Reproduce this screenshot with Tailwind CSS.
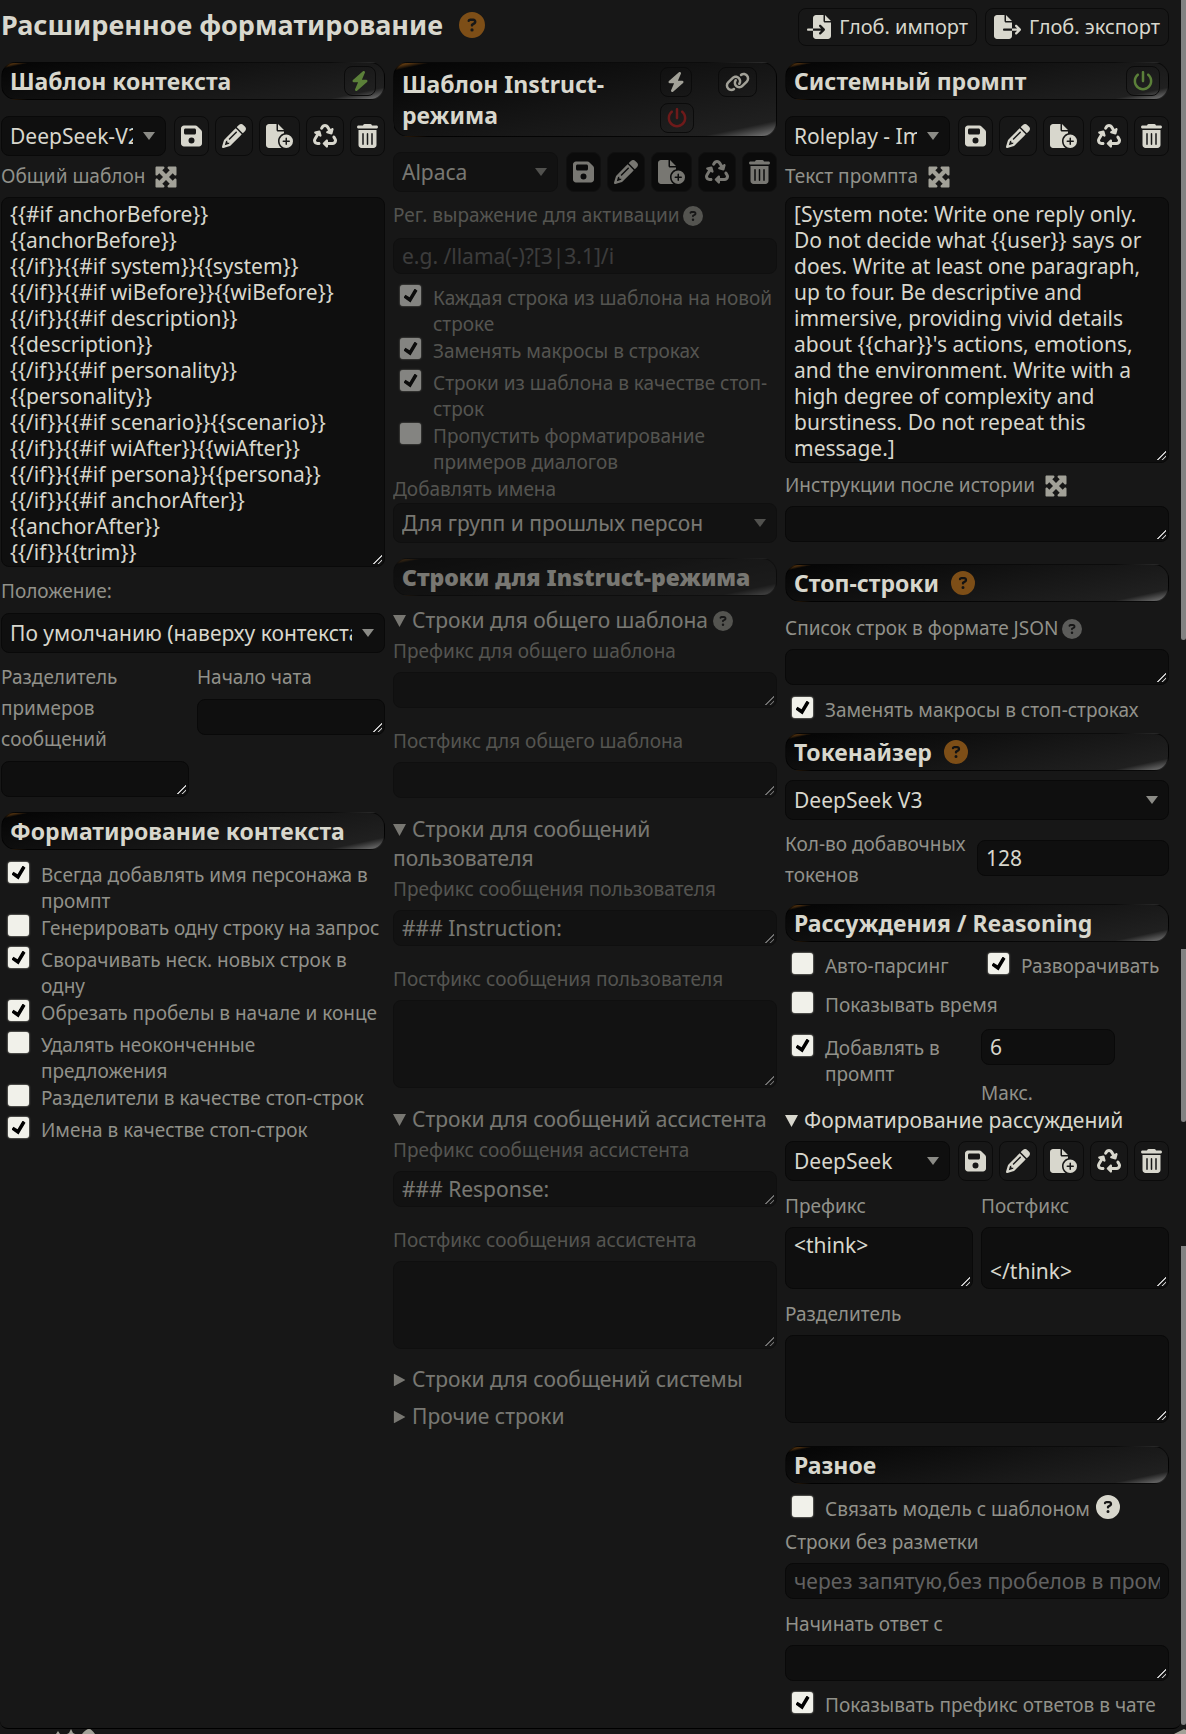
<!DOCTYPE html>
<html lang="ru">
<head>
    <meta charset="UTF-8">
    <meta name="viewport" content="width=device-width, initial-scale=1.0">
    <title>Расширенное форматирование</title>
    <script src="https://cdn.jsdelivr.net/npm/@tailwindcss/browser@4"></script>
</head>
<body class="bg-[#171717] text-[#d8d7cd] font-['Noto_Sans',sans-serif] text-[21px] leading-[26px] scheme-dark overflow-x-hidden">

    <!-- Icon sprite -->
    <svg class="hidden">
        <symbol id="save" viewBox="0 0 448 512"><path d="M64 32C28.7 32 0 60.7 0 96V416c0 35.3 28.7 64 64 64H384c35.3 0 64-28.7 64-64V173.3c0-17-6.7-33.3-18.7-45.3L352 50.7C340 38.7 323.7 32 306.7 32H64zm0 96c0-17.7 14.3-32 32-32H288c17.7 0 32 14.3 32 32v64c0 17.7-14.3 32-32 32H96c-17.7 0-32-14.3-32-32V128zM224 288a64 64 0 1 1 0 128 64 64 0 1 1 0-128z"/></symbol>
        <symbol id="pencil" viewBox="0 0 512 512"><path d="M410.3 231l11.3-11.3-33.9-33.9-62.1-62.1L291.7 89.8l-11.3 11.3-22.6 22.6L58.6 322.9c-10.4 10.4-18 23.3-22.2 37.4L1 480.7c-2.5 8.4-.2 17.5 6.1 23.7s15.3 8.5 23.7 6.1l120.3-35.4c14.1-4.2 27-11.8 37.4-22.2L387.7 253.7 410.3 231zM160 399.4l-9.1 22.7c-4 3.1-8.5 5.4-13.3 6.9L59.4 452l23-78.1c1.4-4.9 3.8-9.4 6.9-13.3l22.7-9.1v32c0 8.8 7.2 16 16 16h32zM362.7 18.7L348.3 33.2 325.7 55.8 314.3 67.1l33.9 33.9 62.1 62.1 33.9 33.9 11.3-11.3 22.6-22.6 14.5-14.5c25-25 25-65.5 0-90.5L453.3 18.7c-25-25-65.5-25-90.5 0zm-47.4 168l-144 144c-6.2 6.2-16.4 6.2-22.6 0s-6.2-16.4 0-22.6l144-144c6.2-6.2 16.4-6.2 22.6 0s6.2 16.4 0 22.6z"/></symbol>
        <symbol id="file-plus" viewBox="0 0 576 512"><path d="M0 64C0 28.7 28.7 0 64 0H224V128c0 17.7 14.3 32 32 32H384v38.6C310.1 219.5 256 287.4 256 368c0 59.1 29.1 111.3 73.7 143.3c-3.2 .5-6.4 .7-9.7 .7H64c-35.3 0-64-28.7-64-64V64zm384 64H256V0L384 128zm48 96a144 144 0 1 1 0 288 144 144 0 1 1 0-288zm16 80c0-8.8-7.2-16-16-16s-16 7.2-16 16v48H368c-8.8 0-16 7.2-16 16s7.2 16 16 16h48v48c0 8.8 7.2 16 16 16s16-7.2 16-16V384h48c8.8 0 16-7.2 16-16s-7.2-16-16-16H448V304z"/></symbol>
        <symbol id="recycle" viewBox="0 0 512 512"><path d="M174.7 45.1C192.2 17 223 0 256 0s63.8 17 81.3 45.1l38.6 61.7 27-15.6c8.4-4.9 18.9-4.2 26.6 1.7s11.1 15.9 8.6 25.3l-23.4 87.4c-3.4 12.8-16.6 20.4-29.4 17l-87.4-23.4c-9.4-2.5-16.3-10.4-17.6-20s3.4-19.1 11.8-23.9l28.4-16.4L283 79c-5.8-9.3-16-15-27-15s-21.2 5.7-27 15l-17.5 28c-9.2 14.8-28.6 19.5-43.6 10.5c-15.3-9.2-20.2-29.2-10.7-44.4l17.5-28zM429.5 251.9c15-9 34.4-4.3 43.6 10.5l24.4 39.1c9.4 15.1 14.4 32.4 14.6 50.2c.3 53.1-42.7 96.4-95.8 96.4L320 448v32c0 9.7-5.8 18.5-14.8 22.2s-19.3 1.7-26.2-5.2l-64-64c-9.4-9.4-9.4-24.6 0-33.9l64-64c6.9-6.9 17.2-8.9 26.2-5.2s14.8 12.5 14.8 22.2v32l96.2 0c17.6 0 31.9-14.4 31.8-32c0-5.9-1.7-11.7-4.8-16.7l-24.4-39.1c-9.5-15.2-4.7-35.2 10.7-44.4zm-364.6-31L36 204.2c-8.4-4.9-13.1-14.3-11.8-23.9s8.2-17.5 17.6-20l87.4-23.4c12.8-3.4 26 4.2 29.4 17L182 241.2c2.5 9.4-.9 19.3-8.6 25.3s-18.2 6.6-26.6 1.7l-26.5-15.3L68.8 335.3c-3.1 5-4.8 10.8-4.8 16.7c-.1 17.6 14.2 32 31.8 32l32.2 0c17.7 0 32 14.3 32 32s-14.3 32-32 32l-32.2 0C42.7 448-.3 404.8 0 351.6c.1-17.8 5.1-35.1 14.6-50.2l50.3-80.5z"/></symbol>
        <symbol id="trash" viewBox="0 0 448 512"><path d="M135.2 17.7L128 32H32C14.3 32 0 46.3 0 64S14.3 96 32 96H416c17.7 0 32-14.3 32-32s-14.3-32-32-32H320l-7.2-14.3C307.4 6.8 296.3 0 284.2 0H163.8c-12.1 0-23.2 6.8-28.6 17.7zM416 128H32V448c0 35.3 28.7 64 64 64H352c35.3 0 64-28.7 64-64V128zM144 208V432c0 8.8-7.2 16-16 16s-16-7.2-16-16V208c0-8.8 7.2-16 16-16s16 7.2 16 16zm96 0V432c0 8.8-7.2 16-16 16s-16-7.2-16-16V208c0-8.8 7.2-16 16-16s16 7.2 16 16zm96 0V432c0 8.8-7.2 16-16 16s-16-7.2-16-16V208c0-8.8 7.2-16 16-16s16 7.2 16 16z"/></symbol>
        <symbol id="bolt" viewBox="0 0 448 512"><path d="M349.4 44.6c5.9-13.7 1.5-29.7-10.6-38.5s-28.6-8-39.9 1.8l-256 224c-10 8.8-13.6 22.9-8.9 35.3S50.7 288 64 288H175.5L98.6 467.4c-5.9 13.7-1.5 29.7 10.6 38.5s28.6 8 39.9-1.8l256-224c10-8.8 13.6-22.9 8.9-35.3s-16.6-20.7-30-20.7H272.5L349.4 44.6z"/></symbol>
        <symbol id="power" viewBox="0 0 512 512"><path d="M288 32c0-17.7-14.3-32-32-32s-32 14.3-32 32V256c0 17.7 14.3 32 32 32s32-14.3 32-32V32zM143.5 120.6c13.6-11.3 15.4-31.5 4.1-45.1s-31.5-15.4-45.1-4.1C49.7 115.4 16 181.8 16 256c0 132.5 107.5 240 240 240s240-107.5 240-240c0-74.2-33.8-140.6-86.6-184.6c-13.6-11.3-33.8-9.4-45.1 4.1s-9.4 33.8 4.1 45.1c38.9 32.3 63.5 81 63.5 135.4c0 97.2-78.8 176-176 176s-176-78.8-176-176c0-54.4 24.7-103.1 63.5-135.4z"/></symbol>
        <symbol id="link" viewBox="0 0 640 512"><path d="M579.8 267.7c56.5-56.5 56.5-148 0-204.5c-50-50-128.8-56.5-186.3-15.4l-1.6 1.1c-14.4 10.3-17.7 30.3-7.4 44.6s30.3 17.7 44.6 7.4l1.6-1.1c32.1-22.9 76-19.3 103.8 8.6c31.5 31.5 31.5 82.5 0 114L422.3 334.8c-31.5 31.5-82.5 31.5-114 0c-27.9-27.9-31.5-71.8-8.6-103.8l1.1-1.6c10.3-14.4 6.9-34.4-7.4-44.6s-34.4-6.9-44.6 7.4l-1.1 1.6C206.5 251.2 213 330 263 380c56.5 56.5 148 56.5 204.5 0L579.8 267.7zM60.2 244.3c-56.5 56.5-56.5 148 0 204.5c50 50 128.8 56.5 186.3 15.4l1.6-1.1c14.4-10.3 17.7-30.3 7.4-44.6s-30.3-17.7-44.6-7.4l-1.6 1.1c-32.1 22.9-76 19.3-103.8-8.6C74 372 74 321 105.5 289.5L217.7 177.2c31.5-31.5 82.5-31.5 114 0c27.9 27.9 31.5 71.8 8.6 103.9l-1.1 1.6c-10.3 14.4-6.9 34.4 7.4 44.6s34.4 6.9 44.6-7.4l1.1-1.6C433.5 260.8 427 182 377 132c-56.5-56.5-148-56.5-204.5 0L60.2 244.3z"/></symbol>
        <symbol id="import" viewBox="0 0 512 512"><path d="M128 64c0-35.3 28.7-64 64-64H352V128c0 17.7 14.3 32 32 32H512V448c0 35.3-28.7 64-64 64H192c-35.3 0-64-28.7-64-64V336H302.1l-39 39c-9.4 9.4-9.4 24.6 0 33.9s24.6 9.4 33.9 0l80-80c9.4-9.4 9.4-24.6 0-33.9l-80-80c-9.4-9.4-24.6-9.4-33.9 0s-9.4 24.6 0 33.9l39 39H128V64zm0 224v48H24c-13.3 0-24-10.7-24-24s10.7-24 24-24H128zM512 128H384V0L512 128z"/></symbol>
        <symbol id="export" viewBox="0 0 576 512"><path d="M0 64C0 28.7 28.7 0 64 0H224V128c0 17.7 14.3 32 32 32H384V288H216c-13.3 0-24 10.7-24 24s10.7 24 24 24H384V448c0 35.3-28.7 64-64 64H64c-35.3 0-64-28.7-64-64V64zM384 336V288H494.1l-39-39c-9.4-9.4-9.4-24.6 0-33.9s24.6-9.4 33.9 0l80 80c9.4 9.4 9.4 24.6 0 33.9l-80 80c-9.4 9.4-24.6 9.4-33.9 0s-9.4-24.6 0-33.9l39-39H384zm0-208H256V0L384 128z"/></symbol>
        <symbol id="maximize" viewBox="0 0 512 512"><path d="M200 32H56C42.7 32 32 42.7 32 56V200c0 9.7 5.8 18.5 14.8 22.2s19.3 1.7 26.2-5.2l40-40 79 79-79 79L73 295c-6.9-6.9-17.2-8.9-26.2-5.2S32 302.3 32 312V456c0 13.3 10.7 24 24 24H200c9.7 0 18.5-5.8 22.2-14.8s1.7-19.3-5.2-26.2l-40-40 79-79 79 79-40 40c-6.9 6.9-8.9 17.2-5.2 26.2s12.5 14.8 22.2 14.8H456c13.3 0 24-10.7 24-24V312c0-9.7-5.8-18.5-14.8-22.2s-19.3-1.7-26.2 5.2l-40 40-79-79 79-79 40 40c6.9 6.9 17.2 8.9 26.2 5.2s14.8-12.5 14.8-22.2V56c0-13.3-10.7-24-24-24H312c-9.7 0-18.5 5.8-22.2 14.8s-1.7 19.3 5.2 26.2l40 40-79 79-79-79 40-40c6.9-6.9 8.9-17.2 5.2-26.2S209.7 32 200 32z"/></symbol>
        <symbol id="help" viewBox="0 0 512 512"><path d="M256 512A256 256 0 1 0 256 0a256 256 0 1 0 0 512zM169.8 165.3c7.9-22.3 29.1-37.3 52.8-37.3h58.3c34.9 0 63.1 28.3 63.1 63.1c0 22.6-12.1 43.5-31.7 54.8L280 264.4c-.2 13-10.9 23.6-24 23.6c-13.3 0-24-10.7-24-24V250.5c0-8.6 4.6-16.5 12.1-20.8l44.3-25.4c4.7-2.7 7.6-7.7 7.6-13.1c0-8.4-6.8-15.1-15.1-15.1H222.6c-3.4 0-6.4 2.1-7.5 5.3l-.4 1.2c-4.4 12.5-18.2 19-30.6 14.6s-19-18.2-14.6-30.6l.4-1.2zM224 352a32 32 0 1 1 64 0 32 32 0 1 1 -64 0z"/></symbol>
        <symbol id="caret" viewBox="0 0 12 8"><path d="M0 0h12L6 8z"/></symbol>
    </svg>

    <div class="flex">
    <!-- Shared look of form controls, section headers and labels -->
    <main class="flex-1 min-w-0 min-h-[calc(100vh-5px)] pl-px pr-3 border-b border-black rounded-b-lg
        [&_svg]:fill-current [&_svg]:shrink-0
        [&_textarea]:block [&_textarea]:w-full [&_textarea]:bg-[#0f0f0f] [&_textarea]:border [&_textarea]:border-[#090909] [&_textarea]:rounded-lg [&_textarea]:px-2 [&_textarea]:py-1 [&_textarea]:resize [&_textarea]:overflow-hidden
        [&_textarea::-webkit-resizer]:bg-[linear-gradient(135deg,transparent_57%,#c4c4c4_59%,#c4c4c4_65%,transparent_67%,transparent_77%,#c4c4c4_79%,#c4c4c4_85%,transparent_87%)] [&_textarea::-webkit-resizer]:[background-size:11px_11px] [&_textarea::-webkit-resizer]:[background-position:2px_2px] [&_textarea::-webkit-resizer]:bg-no-repeat
        [&_.field]:block [&_.field]:h-9 [&_.field]:bg-[#0f0f0f] [&_.field]:border [&_.field]:border-[#090909] [&_.field]:rounded-lg [&_.field]:px-2
        [&_select]:block [&_select]:w-full [&_select]:h-10 [&_select]:appearance-none [&_select]:bg-[#0f0f0f] [&_select]:border [&_select]:border-[#090909] [&_select]:rounded-lg [&_select]:pl-2 [&_select]:pr-8
        [&_button]:flex [&_button]:items-center [&_button]:justify-center [&_button]:border [&_button]:border-[#0b0b0b] [&_button]:rounded-lg [&_button]:px-1.5
        [&_.bar]:flex [&_.bar]:items-center [&_.bar]:min-h-[38px] [&_.bar]:px-2 [&_.bar]:border [&_.bar]:border-black/60 [&_.bar]:rounded-[15px] [&_.bar]:font-bold [&_.bar]:text-[23px] [&_.bar]:leading-[31px] [&_.bar]:bg-[linear-gradient(348deg,#6a6a6a_2%,#202020_10%,#060606_95%,#a0601a_100%)]
        [&_.lbl]:block [&_.lbl]:text-[19px] [&_.lbl]:leading-[31px] [&_.lbl]:text-[#91918a]
        [&_.opt]:flex [&_.opt]:items-start [&_.opt]:min-h-8 [&_.opt]:pt-px [&_.opt]:pl-[7px] [&_.opt]:gap-3 [&_.opt]:text-[19px] [&_.opt]:leading-[26px] [&_.opt]:text-[#91918a]
        [&_[type=checkbox]]:appearance-none [&_[type=checkbox]]:shrink-0 [&_[type=checkbox]]:grid [&_[type=checkbox]]:place-content-center [&_[type=checkbox]]:size-[21px] [&_[type=checkbox]]:rounded-[3px] [&_[type=checkbox]]:bg-[#f1f1ea] [&_[type=checkbox]]:shadow-[0_0_2px_#d8d7cd]
        [&_[type=checkbox]:checked::before]:content-[''] [&_[type=checkbox]:checked::before]:size-3.5 [&_[type=checkbox]:checked::before]:bg-black [&_[type=checkbox]:checked::before]:[clip-path:polygon(14%_44%,0_65%,50%_100%,100%_16%,80%_0%,43%_62%)]
        [&_summary]:leading-[29px] [&_summary]:list-none
        [&_summary::before]:content-[''] [&_summary::before]:inline-block [&_summary::before]:w-[13px] [&_summary::before]:h-3 [&_summary::before]:mr-1.5 [&_summary::before]:align-[1px] [&_summary::before]:bg-current [&_summary::before]:[clip-path:polygon(0_0,100%_0,50%_100%)]
        [&_details:not([open])>summary::before]:-rotate-90">

        <!-- Title row -->
        <div class="flex items-start gap-2 pt-2">
            <h3 class="flex-1 flex items-center gap-4 text-[27px] leading-[33px] font-bold">
                Расширенное форматирование
                <svg class="size-[26px] text-[#7d4e17]"><use href="#help"/></svg>
            </h3>
            <button class="h-[38px] gap-2 px-2! text-xl"><svg class="size-6"><use href="#import"/></svg>Глоб. импорт</button>
            <button class="h-[38px] gap-2 px-2! text-xl"><svg class="w-[27px] h-6"><use href="#export"/></svg>Глоб. экспорт</button>
        </div>

        <div class="grid grid-cols-3 gap-2 items-start pt-4">

            <!-- Context template -->
            <section class="min-w-0">
                <h4 class="bar justify-between">
                    Шаблон контекста
                    <button class="h-[30px] text-[#5b8039]" aria-label="Автовыбор"><svg class="w-[18px] h-5"><use href="#bolt"/></svg></button>
                </h4>
                <div class="flex gap-2 mt-4">
                    <div class="relative flex-1 min-w-0">
                        <select aria-label="Шаблон контекста"><option>DeepSeek-V2.5</option></select>
                        <svg class="absolute right-[11px] top-4 w-3 h-2 text-[#8b8b86] pointer-events-none"><use href="#caret"/></svg>
                    </div>
                    <div class="flex gap-1.5">
                        <button aria-label="Сохранить"><svg class="w-[21px] h-6"><use href="#save"/></svg></button>
                        <button aria-label="Переименовать"><svg class="size-6"><use href="#pencil"/></svg></button>
                        <button aria-label="Сохранить как"><svg class="w-[27px] h-6"><use href="#file-plus"/></svg></button>
                        <button aria-label="Восстановить"><svg class="size-6"><use href="#recycle"/></svg></button>
                        <button aria-label="Удалить"><svg class="w-[21px] h-6"><use href="#trash"/></svg></button>
                    </div>
                </div>
                <div class="flex items-center gap-[9px] my-[5px] text-[#a2a198]">
                    <label class="lbl" for="story">Общий шаблон</label>
                    <svg class="size-6"><use href="#maximize"/></svg>
                </div>
                <textarea id="story" class="h-[370px] py-[3px]!">{{#if anchorBefore}}
{{anchorBefore}}
{{/if}}{{#if system}}{{system}}
{{/if}}{{#if wiBefore}}{{wiBefore}}
{{/if}}{{#if description}}
{{description}}
{{/if}}{{#if personality}}
{{personality}}
{{/if}}{{#if scenario}}{{scenario}}
{{/if}}{{#if wiAfter}}{{wiAfter}}
{{/if}}{{#if persona}}{{persona}}
{{/if}}{{#if anchorAfter}}
{{anchorAfter}}
{{/if}}{{trim}}</textarea>
                <label class="lbl mt-[9px] mb-1.5" for="position">Положение:</label>
                <div class="relative">
                    <select id="position"><option>По умолчанию (наверху контекста)</option></select>
                    <svg class="absolute right-[11px] top-4 w-3 h-2 text-[#8b8b86] pointer-events-none"><use href="#caret"/></svg>
                </div>
                <div class="grid grid-cols-2 gap-2 items-start mt-[9px]">
                    <div>
                        <label class="lbl mb-1.5" for="separator">Разделитель примеров сообщений</label>
                        <textarea id="separator" class="h-9"></textarea>
                    </div>
                    <div>
                        <label class="lbl mb-1.5" for="chat-start">Начало чата</label>
                        <textarea id="chat-start" class="h-9"></textarea>
                    </div>
                </div>

                <h4 class="bar mt-[15px] mb-[11px]">Форматирование контекста</h4>
                <label class="opt"><input type="checkbox" checked><span>Всегда добавлять имя персонажа в промпт</span></label>
                <label class="opt"><input type="checkbox"><span>Генерировать одну строку на запрос</span></label>
                <label class="opt"><input type="checkbox" checked><span>Сворачивать неск. новых строк в одну</span></label>
                <label class="opt"><input type="checkbox" checked><span>Обрезать пробелы в начале и конце</span></label>
                <label class="opt"><input type="checkbox"><span>Удалять неоконченные предложения</span></label>
                <label class="opt"><input type="checkbox"><span>Разделители в качестве стоп-строк</span></label>
                <label class="opt"><input type="checkbox" checked><span>Имена в качестве стоп-строк</span></label>
            </section>

            <!-- Instruct template -->
            <section class="min-w-0">
                <h4 class="bar min-h-[75px]! justify-between">
                    <span class="w-[220px]">Шаблон Instruct-режима</span>
                    <span class="grid grid-cols-[58px_50px] gap-y-1.5 justify-items-start">
                        <button class="h-[30px] text-[#a2a198]" aria-label="Автовыбор"><svg class="w-[18px] h-5"><use href="#bolt"/></svg></button>
                        <button class="h-[30px] text-[#a2a198]" aria-label="Связать"><svg class="w-[25px] h-5"><use href="#link"/></svg></button>
                        <button class="h-[30px] text-[#6e1a1a]" aria-label="Включить"><svg class="size-5"><use href="#power"/></svg></button>
                    </span>
                </h4>
                <div class="opacity-50">
                    <div class="flex gap-2 mt-[15px]">
                        <div class="relative flex-1 min-w-0">
                            <select aria-label="Шаблон Instruct"><option>Alpaca</option></select>
                            <svg class="absolute right-[11px] top-4 w-3 h-2 text-[#8b8b86] pointer-events-none"><use href="#caret"/></svg>
                        </div>
                        <div class="flex gap-1.5 [&_button]:bg-black">
                            <button aria-label="Сохранить"><svg class="w-[21px] h-6"><use href="#save"/></svg></button>
                            <button aria-label="Переименовать"><svg class="size-6"><use href="#pencil"/></svg></button>
                            <button aria-label="Сохранить как"><svg class="w-[27px] h-6"><use href="#file-plus"/></svg></button>
                            <button aria-label="Восстановить"><svg class="size-6"><use href="#recycle"/></svg></button>
                            <button aria-label="Удалить"><svg class="w-[21px] h-6"><use href="#trash"/></svg></button>
                        </div>
                    </div>
                    <div class="flex items-center gap-1 mt-2 mb-[7px] text-[#91918a]">
                        <label class="lbl" for="regex">Рег. выражение для активации</label>
                        <svg class="size-5"><use href="#help"/></svg>
                    </div>
                    <input id="regex" class="field w-full placeholder:text-[#616161]" type="text" placeholder="e.g. /llama(-)?[3|3.1]/i">
                    <div class="mt-2.5">
                        <label class="opt"><input type="checkbox" checked><span>Каждая строка из шаблона на новой строке</span></label>
                        <label class="opt"><input type="checkbox" checked><span>Заменять макросы в строках</span></label>
                        <label class="opt"><input type="checkbox" checked><span>Строки из шаблона в качестве стоп-строк</span></label>
                        <label class="opt"><input type="checkbox"><span>Пропустить форматирование примеров диалогов</span></label>
                    </div>
                    <label class="lbl leading-7!" for="names">Добавлять имена</label>
                    <div class="relative">
                        <select id="names"><option>Для групп и прошлых персон</option></select>
                        <svg class="absolute right-[11px] top-4 w-3 h-2 text-[#8b8b86] pointer-events-none"><use href="#caret"/></svg>
                    </div>

                    <h4 class="bar mt-[15px] mb-2.5 font-black!">Строки для Instruct-режима</h4>
                    <details open>
                        <summary>Строки для общего шаблона <svg class="inline size-5 align-[-3px] text-[#91918a]"><use href="#help"/></svg></summary>
                        <label class="lbl mt-px mb-[5px]" for="sys-pre">Префикс для общего шаблона</label>
                        <textarea id="sys-pre" class="h-9"></textarea>
                        <label class="lbl mt-[18px] mb-[5px]" for="sys-post">Постфикс для общего шаблона</label>
                        <textarea id="sys-post" class="h-9"></textarea>
                    </details>
                    <details class="mt-[17px]" open>
                        <summary>Строки для сообщений пользователя</summary>
                        <label class="lbl mt-px mb-[5px]" for="user-pre">Префикс сообщения пользователя</label>
                        <textarea id="user-pre" class="h-9">### Instruction:</textarea>
                        <label class="lbl mt-[18px] mb-[5px]" for="user-post">Постфикс сообщения пользователя</label>
                        <textarea id="user-post" class="h-22"></textarea>
                    </details>
                    <details class="mt-[17px]" open>
                        <summary>Строки для сообщений ассистента</summary>
                        <label class="lbl mt-px mb-[5px]" for="bot-pre">Префикс сообщения ассистента</label>
                        <textarea id="bot-pre" class="h-9">### Response:</textarea>
                        <label class="lbl mt-[18px] mb-[5px]" for="bot-post">Постфикс сообщения ассистента</label>
                        <textarea id="bot-post" class="h-22"></textarea>
                    </details>
                    <details class="mt-4">
                        <summary>Строки для сообщений системы</summary>
                    </details>
                    <details class="mt-2">
                        <summary>Прочие строки</summary>
                    </details>
                </div>
            </section>

            <!-- System prompt -->
            <section class="min-w-0">
                <h4 class="bar justify-between">
                    Системный промпт
                    <button class="h-[30px] text-[#5b8039]" aria-label="Выключить"><svg class="size-5"><use href="#power"/></svg></button>
                </h4>
                <div class="flex gap-2 mt-4">
                    <div class="relative flex-1 min-w-0">
                        <select aria-label="Системный промпт"><option>Roleplay - Immersive</option></select>
                        <svg class="absolute right-[11px] top-4 w-3 h-2 text-[#8b8b86] pointer-events-none"><use href="#caret"/></svg>
                    </div>
                    <div class="flex gap-1.5">
                        <button aria-label="Сохранить"><svg class="w-[21px] h-6"><use href="#save"/></svg></button>
                        <button aria-label="Переименовать"><svg class="size-6"><use href="#pencil"/></svg></button>
                        <button aria-label="Сохранить как"><svg class="w-[27px] h-6"><use href="#file-plus"/></svg></button>
                        <button aria-label="Восстановить"><svg class="size-6"><use href="#recycle"/></svg></button>
                        <button aria-label="Удалить"><svg class="w-[21px] h-6"><use href="#trash"/></svg></button>
                    </div>
                </div>
                <div class="flex items-center gap-[9px] my-[5px] text-[#a2a198]">
                    <label class="lbl" for="prompt">Текст промпта</label>
                    <svg class="size-6"><use href="#maximize"/></svg>
                </div>
                <textarea id="prompt" class="h-[266px] py-[3px]!">[System note: Write one reply only. Do not decide what {{user}} says or does. Write at least one paragraph, up to four. Be descriptive and immersive, providing vivid details about {{char}}'s actions, emotions, and the environment. Write with a high degree of complexity and burstiness. Do not repeat this message.]</textarea>
                <div class="flex items-center gap-[9px] mt-[7px] mb-[5px] text-[#a2a198]">
                    <label class="lbl" for="post-history">Инструкции после истории</label>
                    <svg class="size-6"><use href="#maximize"/></svg>
                </div>
                <textarea id="post-history" class="h-9"></textarea>

                <h4 class="bar gap-3 mt-[22px]">Стоп-строки <svg class="size-6 text-[#7d4e17]"><use href="#help"/></svg></h4>
                <div class="flex items-center gap-1 mt-[11px] mb-[5px] text-[#5c5c5a]">
                    <label class="lbl" for="stops">Список строк в формате JSON</label>
                    <svg class="size-5"><use href="#help"/></svg>
                </div>
                <textarea id="stops" class="h-9"></textarea>
                <label class="opt mt-[11px]"><input type="checkbox" checked><span>Заменять макросы в стоп-строках</span></label>

                <h4 class="bar gap-3 mt-[5px] mb-[9px]">Токенайзер <svg class="size-6 text-[#7d4e17]"><use href="#help"/></svg></h4>
                <div class="relative">
                    <select aria-label="Токенайзер"><option>DeepSeek V3</option></select>
                    <svg class="absolute right-[11px] top-4 w-3 h-2 text-[#8b8b86] pointer-events-none"><use href="#caret"/></svg>
                </div>
                <div class="flex items-start gap-[5px] mt-[9px]">
                    <label class="lbl flex-1" for="padding">Кол-во добавочных токенов</label>
                    <input id="padding" class="field w-1/2 mt-[11px]" type="text" value="128">
                </div>

                <h4 class="bar mt-[13px] mb-2.5">Рассуждения / Reasoning</h4>
                <div class="grid grid-cols-2 gap-x-2 gap-y-[7px]">
                    <label class="opt"><input type="checkbox"><span>Авто-парсинг</span></label>
                    <label class="opt"><input type="checkbox" checked><span>Разворачивать</span></label>
                    <label class="opt col-span-2"><input type="checkbox"><span>Показывать время</span></label>
                </div>
                <div class="grid grid-cols-2 gap-x-2 items-start mt-1.5">
                    <label class="opt mt-[5px]"><input type="checkbox" checked><span>Добавлять в промпт</span></label>
                    <div>
                        <input id="max" class="field w-[134px]" type="text" value="6">
                        <label class="lbl mt-[13px] h-7" for="max">Макс.</label>
                    </div>
                </div>
                <details open>
                    <summary>Форматирование рассуждений</summary>
                    <div class="flex gap-2 mt-1.5">
                        <div class="relative flex-1 min-w-0">
                            <select aria-label="Шаблон рассуждений"><option>DeepSeek</option></select>
                            <svg class="absolute right-[11px] top-4 w-3 h-2 text-[#8b8b86] pointer-events-none"><use href="#caret"/></svg>
                        </div>
                        <div class="flex gap-1.5">
                            <button aria-label="Сохранить"><svg class="w-[21px] h-6"><use href="#save"/></svg></button>
                            <button aria-label="Переименовать"><svg class="size-6"><use href="#pencil"/></svg></button>
                            <button aria-label="Сохранить как"><svg class="w-[27px] h-6"><use href="#file-plus"/></svg></button>
                            <button aria-label="Восстановить"><svg class="size-6"><use href="#recycle"/></svg></button>
                            <button aria-label="Удалить"><svg class="w-[21px] h-6"><use href="#trash"/></svg></button>
                        </div>
                    </div>
                    <div class="grid grid-cols-2 gap-2 mt-2.5">
                        <div>
                            <label class="lbl mb-[5px]" for="think-pre">Префикс</label>
                            <textarea id="think-pre" class="h-[62px]">&lt;think&gt;
</textarea>
                        </div>
                        <div>
                            <label class="lbl mb-[5px]" for="think-post">Постфикс</label>
                            <textarea id="think-post" class="h-[62px]">

&lt;/think&gt;</textarea>
                        </div>
                    </div>
                    <label class="lbl mt-2.5 mb-[5px]" for="think-sep">Разделитель</label>
                    <textarea id="think-sep" class="h-22"></textarea>
                </details>

                <h4 class="bar mt-[23px] mb-[11px]">Разное</h4>
                <div class="flex items-start gap-1.5">
                    <label class="opt"><input type="checkbox"><span>Связать модель с шаблоном</span></label>
                    <svg class="size-6"><use href="#help"/></svg>
                </div>
                <label class="lbl mb-[5px]" for="nonmarkup">Строки без разметки</label>
                <input id="nonmarkup" class="field w-full placeholder:text-[#616161]" type="text" placeholder="через запятую,без пробелов в промежутках">
                <label class="lbl mt-2.5 mb-[5px]" for="start-with">Начинать ответ с</label>
                <textarea id="start-with" class="h-9"></textarea>
                <label class="opt mt-2.5"><input type="checkbox" checked><span>Показывать префикс ответов в чате</span></label>
            </section>
        </div>
    </main>

    <!-- Scroll thumbs -->
    <div class="w-[5px] shrink-0 [&>i]:block [&>i]:bg-[#828282]" aria-hidden="true">
        <i class="h-[640px] rounded-b-sm"></i>
        <i class="h-[173px] mt-[309px] rounded-b-sm"></i>
        <i class="h-[479px] mt-[124px] rounded-b-sm"></i>
    </div>
    </div>

    <!-- Send bar peeking out below the panel -->
    <footer class="flex justify-between h-[5px] overflow-hidden">
        <svg class="w-24 h-[5px] fill-[#a2a198]" viewBox="0 0 96 5"><path d="M56 5l2-3 2 3zM67 5l2-1 2-4 2 4 2 1zM82 5c2-3 5-5 7-5s4 2 6 5z"/></svg>
        <svg class="w-3 h-[5px] fill-[#a2a198]" viewBox="0 0 12 5"><path d="M0 5L10 0l2 1v4z"/></svg>
    </footer>
</body>
</html>
